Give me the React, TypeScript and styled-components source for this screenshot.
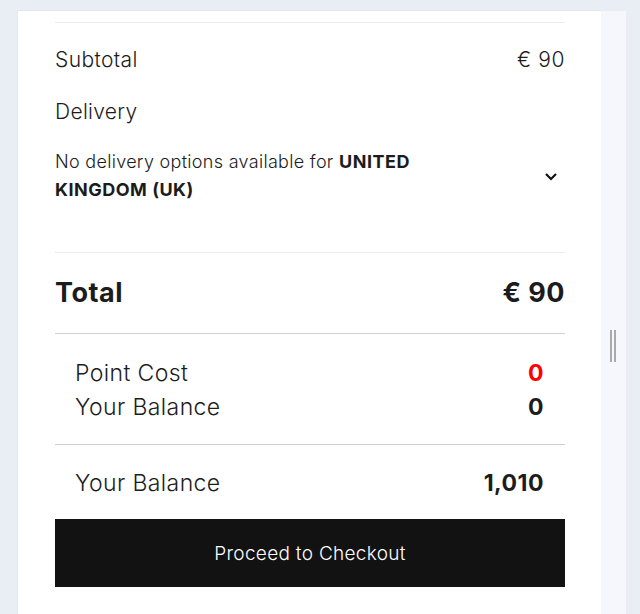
import React from "react";
import styled, { createGlobalStyle } from "styled-components";

const Global = createGlobalStyle`
  html, body { margin: 0; padding: 0; }
  body {
    background: #e9edf4;
    font-family: Inter, "Noto Sans", Roboto, sans-serif;
    color: #1c1c1c;
    overflow: hidden;
  }
`;

const Page = styled.div`
  display: flex;
  align-items: flex-start;
  padding: 10px 0 0 17px;
  height: 614px;
  box-sizing: border-box;
`;

const Card = styled.div`
  width: 584px;
  box-sizing: border-box;
  background: #fff;
  border-top: 1px solid #e2e4e9;
  border-left: 1px solid #e4e7ec;
  padding: 11px 36px 60px 37px;
  display: flex;
  flex-direction: column;
`;

const Side = styled.div`
  width: 25px;
  margin-top: 1px;
  align-self: stretch;
  background: #f5f7fc;
  display: flex;
  justify-content: center;
  padding-top: 319px;
`;

const Handle = styled.div`
  width: 6px;
  height: 32px;
  border-left: 2px solid #a9a9a9;
  border-right: 2px solid #a9a9a9;
  box-sizing: border-box;
  margin-left: -1px;
`;

const Divider = styled.div<{ $strong?: boolean; $gap?: number }>`
  height: 1px;
  background: ${(p) => (p.$strong ? "#d2d2d2" : "#ebebeb")};
  margin-top: ${(p) => p.$gap ?? 0}px;
`;

const Row = styled.div<{ $gap: number; $size: number; $lh: number; $bold?: boolean }>`
  display: flex;
  justify-content: space-between;
  align-items: center;
  margin-top: ${(p) => p.$gap}px;
  font-size: ${(p) => p.$size}px;
  line-height: ${(p) => p.$lh}px;
  font-weight: ${(p) => (p.$bold ? 700 : 300)};
  letter-spacing: ${(p) => (p.$bold ? "0.5px" : "0.4px")};
`;

const Value = styled.span<{ $bold?: boolean; $red?: boolean }>`
  font-weight: ${(p) => (p.$bold ? 700 : 300)};
  letter-spacing: ${(p) => (p.$bold ? "0.5px" : "0.6px")};
  color: ${(p) => (p.$red ? "#ff0000" : "inherit")};
`;

const Label = styled.div<{ $gap: number }>`
  margin-top: ${(p) => p.$gap}px;
  font-size: 21px;
  line-height: 30px;
  font-weight: 300;
  letter-spacing: 0.3px;
`;

const DeliveryRow = styled.div`
  display: flex;
  align-items: center;
  justify-content: space-between;
  margin-top: 21px;
  padding-right: 7px;
`;

const DeliveryText = styled.div`
  width: 380px;
  font-size: 18px;
  line-height: 28px;
  font-weight: 300;
  letter-spacing: 0.3px;
  b { font-weight: 700; letter-spacing: 0.5px; }
`;

const Points = styled.div`
  padding: 0 21px 0 20px;
  display: flex;
  flex-direction: column;
`;

const Button = styled.button`
  margin-top: 19px;
  height: 68px;
  width: 100%;
  border: none;
  background: #121212;
  color: #fff;
  font-family: inherit;
  font-size: 19px;
  font-weight: 300;
  letter-spacing: 0.3px;
  cursor: pointer;
`;

const Chevron = () => (
  <svg width="14" height="10" viewBox="0 0 14 10">
    <path d="M2 3 L7 8 L12 3" fill="none" stroke="#111" strokeWidth="2.2" />
  </svg>
);

export default function App() {
  return (
    <>
      <Global />
      <Page>
        <Card>
          <Divider />
          <Row $gap={22} $size={21} $lh={30}>
            <span>Subtotal</span>
            <Value>€ 90</Value>
          </Row>
          <Label $gap={22}>Delivery</Label>
          <DeliveryRow>
            <DeliveryText>
              No delivery options available for <b>UNITED KINGDOM (UK)</b>
            </DeliveryText>
            <Chevron />
          </DeliveryRow>
          <Divider $gap={48} />
          <Row $gap={22} $size={27} $lh={36} $bold>
            <span>Total</span>
            <Value $bold>€ 90</Value>
          </Row>
          <Divider $strong $gap={22} />
          <Points>
            <Row $gap={22} $size={23} $lh={34}>
              <span>Point Cost</span>
              <Value $bold $red>0</Value>
            </Row>
            <Row $gap={0} $size={23} $lh={34}>
              <span>Your Balance</span>
              <Value $bold>0</Value>
            </Row>
          </Points>
          <Divider $strong $gap={20} />
          <Points>
            <Row $gap={21} $size={23} $lh={34}>
              <span>Your Balance</span>
              <Value $bold>1,010</Value>
            </Row>
          </Points>
          <Button>Proceed to Checkout</Button>
        </Card>
        <Side>
          <Handle />
        </Side>
      </Page>
    </>
  );
}
